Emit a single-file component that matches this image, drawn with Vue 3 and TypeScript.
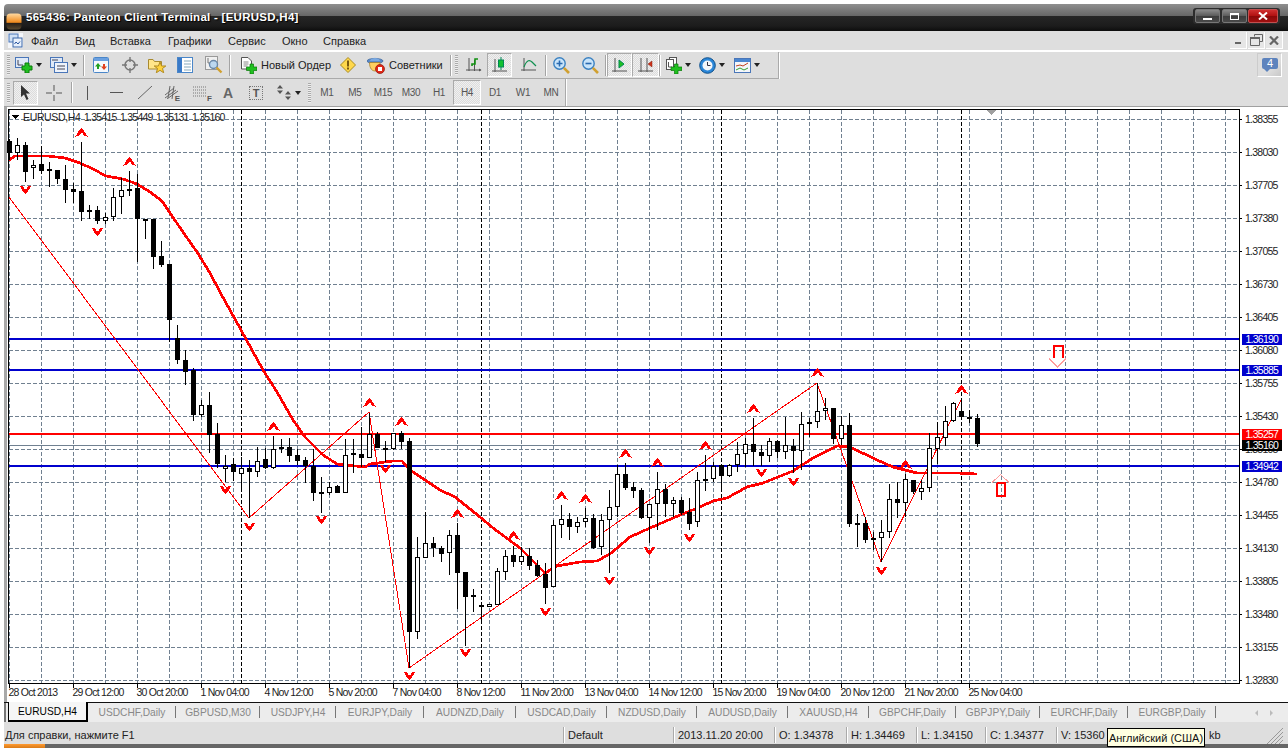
<script setup lang="ts">
type C = [number, number, number, number, number, number]
// k, body top, body bottom, high, low, white(1)/black(0)
const raw: C[] = [
[0,141,153,139,160,0],[1,145,153,138,160,1],[2,145,172,142,182,0],[3,165,168,160,179,1],[4,164,171,146,174,0],[5,169,171,162,187,0],[6,170,179,170,184,0],[7,179,190,165,203,0],[8,189,192,183,203,0],[9,191,212,142,221,0],
[10,210,212,205,219,0],[11,210,221,206,224,0],[12,217,221,213,224,1],[13,197,217,188,221,1],[14,190,197,178,214,1],[15,189,191,171,196,0],[16,188,219,174,262,0],[17,219,221,219,239,0],[18,219,257,219,269,0],[19,256,265,241,267,0],
[20,264,320,264,342,0],[21,338,360,325,364,0],[22,360,372,350,385,0],[23,370,415,368,421,0],[24,405,415,400,417,1],[25,405,435,392,453,0],[26,434,464,423,468,0],[27,466,469,455,482,1],[28,464,472,458,481,0],[29,468,474,457,490,1],
[30,468,472,460,518,0],[31,461,472,447,477,1],[32,459,468,448,469,0],[33,449,468,436,469,1],[34,447,449,439,453,1],[35,447,456,438,462,0],[36,455,461,449,465,0],[37,460,466,457,483,0],[38,466,493,449,501,0],[39,492,494,477,513,0],
[40,487,493,482,495,1],[41,486,493,485,493,0],[42,455,493,439,493,1],[43,453,455,439,473,1],[44,454,458,427,467,0],[45,434,458,413,458,1],[46,434,448,432,448,0],[47,448,449,441,462,0],[48,433,449,433,450,1],[49,433,442,431,449,0],
[50,441,632,438,668,0],[51,557,632,537,639,1],[52,543,558,512,558,1],[53,543,548,537,557,0],[54,548,554,546,562,0],[55,535,553,530,575,1],[56,535,573,523,609,0],[57,572,597,572,646,0],[58,595,597,589,612,0],[59,605,607,605,622,0],
[60,604,607,604,607,1],[61,571,605,568,605,1],[62,556,572,550,580,1],[63,555,562,546,567,0],[64,556,562,547,565,1],[65,556,566,548,570,0],[66,565,576,560,577,0],[67,574,588,563,604,0],[68,525,587,520,587,1],[69,519,525,505,538,1],
[70,519,527,513,540,0],[71,522,527,517,533,1],[72,518,522,508,527,1],[73,518,548,514,549,0],[74,520,547,514,555,1],[75,507,520,490,573,1],[76,474,507,465,517,1],[77,474,488,463,490,0],[78,487,491,482,498,0],[79,490,518,488,519,0],
[80,504,518,504,543,1],[81,489,504,472,530,1],[82,489,504,484,517,0],[83,500,504,497,517,1],[84,500,513,497,515,0],[85,512,524,498,530,0],[86,480,522,472,527,1],[87,479,481,455,491,0],[88,466,479,462,482,1],[89,465,476,464,490,0],
[90,465,476,464,477,1],[91,454,465,442,472,1],[92,444,454,438,467,1],[93,444,452,418,466,0],[94,452,456,445,466,0],[95,441,456,438,462,1],[96,441,452,440,458,0],[97,445,452,417,459,1],[98,446,451,439,473,0],[99,424,451,412,470,1],
[100,422,424,418,437,1],[101,411,422,383,428,1],[102,408,411,398,420,1],[103,408,439,408,444,0],[104,425,439,416,445,1],[105,425,524,413,527,0],[106,523,524,514,547,0],[107,523,540,517,543,0],[108,538,540,532,550,0],[109,532,538,520,562,1],
[110,499,532,484,538,1],[111,499,503,482,518,0],[112,479,503,474,517,1],[113,480,492,480,494,0],[114,488,492,480,500,1],[115,448,488,433,492,1],[116,437,449,422,464,1],[117,421,438,406,446,1],[118,403,421,402,422,1],[119,411,417,400,418,0],
[120,417,419,410,423,0],[121,418,444,414,447,0]]
const candles = raw.map(([k, t, b, h, l, w]) => ({ k, c: 9.5 + 8 * k, t, b, h, l, w: w === 1 }))

const hGrid = Array.from({ length: 18 }, (_, i) => 119 + 33 * i)
const prices = ['1.38355','1.38030','1.37705','1.37380','1.37055','1.36730','1.36405','1.36080','1.35755','1.35430','1.35105','1.34780','1.34455','1.34130','1.33805','1.33480','1.33155','1.32830']
const vGrid = Array.from({ length: 39 }, (_, i) => 9.5 + 32 * i)
const seps = [241.5, 481.5, 721.5, 961.5]
const times = ['28 Oct 2013','29 Oct 12:00','30 Oct 20:00','1 Nov 04:00','4 Nov 12:00','5 Nov 20:00','7 Nov 04:00','8 Nov 12:00','11 Nov 20:00','13 Nov 04:00','14 Nov 12:00','15 Nov 20:00','19 Nov 04:00','20 Nov 12:00','21 Nov 20:00','25 Nov 04:00']

const hLines = [
  { y: 339, c: '#0000cd', p: '1.36190' },
  { y: 370, c: '#0000cd', p: '1.35885' },
  { y: 434, c: '#ff0000', p: '1.35257' },
  { y: 466, c: '#0000cd', p: '1.34942' },
]
const ma = '9,160 15,156 33,156 48,156 65,158 80,163 93,169 106,176 123,179 137,184 150,192 162,201 170,213 183,232 197,252 210,273 220,292 230,310 263,370 277,392 293,420 305,437 323,455 337,464 365,467 370,464 393,461 402,461 410,470 440,490 455,497 480,517 493,528 520,548 545,573 557,566 580,562 597,561 610,554 630,537 650,528 680,515 700,507 713,501 727,498 747,487 763,483 793,471 813,458 837,446 850,447 877,460 893,467 917,473 947,473 957,473 977,474'
const zig = '9,197 249,518 369,412 409,668 817,383 881,562 961,400'
const ups = [[81,128],[129,157],[273,422],[369,398],[401,417],[457,509],[513,531],[561,491],[585,494],[625,449],[657,458],[705,441],[753,404],[817,368],[905,460],[961,385]]
const downs = [[25,194],[97,236],[225,494],[249,531],[321,524],[385,473],[409,680],[465,657],[545,616],[609,585],[649,555],[689,542],[761,477],[793,486],[881,575]]
const upPath = 'M0 0L3 3.500L6 8.500L3 8L1 5L-1 5.500L-3 8L-6 8.500L-3 3.500Z'

const menu = ['Файл', 'Вид', 'Вставка', 'Графики', 'Сервис', 'Окно', 'Справка']
const periods = ['M1', 'M5', 'M15', 'M30', 'H1', 'H4', 'D1', 'W1', 'MN']
const tabs = [
  { n: 'EURUSD,H4', w: 80 }, { n: 'USDCHF,Daily', w: 88 }, { n: 'GBPUSD,M30', w: 84 }, { n: 'USDJPY,H4', w: 76 },
  { n: 'EURJPY,Daily', w: 88 }, { n: 'AUDNZD,Daily', w: 92 }, { n: 'USDCAD,Daily', w: 91 }, { n: 'NZDUSD,Daily', w: 90 },
  { n: 'AUDUSD,Daily', w: 91 }, { n: 'XAUUSD,H4', w: 81 }, { n: 'GBPCHF,Daily', w: 87 }, { n: 'GBPJPY,Daily', w: 84 },
  { n: 'EURCHF,Daily', w: 88 }, { n: 'EURGBP,Daily', w: 88 },
]
</script>

<template>
  <div class="app">
    <header class="title">
      <svg class="logo" width="16" height="17" viewBox="0 0 16 17">
        <defs>
          <linearGradient id="lg" x1="0" y1="0" x2="0" y2="1">
            <stop offset="0" stop-color="#ffd9a0" /><stop offset="0.55" stop-color="#f08a1c" /><stop offset="0.62" stop-color="#2a2118" /><stop offset="1" stop-color="#5a4a30" />
          </linearGradient>
        </defs>
        <rect x="0.5" y="0.5" width="15" height="16" rx="4" fill="url(#lg)" />
      </svg>
      <span class="title-text">565436: Panteon Client Terminal - [EURUSD,H4]</span>
      <div class="winctl">
        <span class="wb"><i class="w-min"></i></span>
        <span class="wb"><i class="w-max"></i></span>
        <span class="wb close">
          <svg width="10" height="8" viewBox="0 0 10 8"><path d="M1 0.5L9 7.5M9 0.5L1 7.5" stroke="#fff" stroke-width="2" fill="none" /></svg>
        </span>
      </div>
    </header>

    <nav class="menu">
      <svg class="doc-ico" width="15" height="15" viewBox="0 0 15 15">
        <rect x="0" y="0" width="15" height="15" fill="#f4f6fa" />
        <rect x="1" y="1" width="9" height="8" fill="#cfe0f5" stroke="#4a76b8" />
        <rect x="5" y="5" width="9" height="9" fill="#e8f0fb" stroke="#3a66a8" />
        <path d="M6.500 11L8 9L10 11L12 8.500" stroke="#2a56a0" fill="none" />
      </svg>
      <div class="menu-items">
        <span v-for="m in menu" :key="m">{{ m }}</span>
      </div>
      <div class="mdi">
        <span class="mb"><i class="m-min"></i></span>
        <span class="mb">
          <svg width="13" height="12" viewBox="0 0 13 12"><path d="M4.500 2.500V0.500H12.500V7.500H10M0.500 3.500H9.500V11.500H0.500Z" stroke="#666" fill="none" /><path d="M0 4H10" stroke="#666" stroke-width="2" /></svg>
        </span>
        <span class="mb">
          <svg width="10" height="9" viewBox="0 0 10 9"><path d="M1 0.500L9 8.500M9 0.500L1 8.500" stroke="#666" stroke-width="2.200" /></svg>
        </span>
      </div>
    </nav>

    <div class="tb-row">
      <div class="tb tb1">
        <span class="grip"></span>
        <span class="cell">
          <svg width="18" height="16" viewBox="0 0 18 16"><rect x="0.500" y="0.500" width="13" height="10" fill="#dfe9f7" stroke="#4a76b8" /><path d="M3 3V8H8" stroke="#445" fill="none" /><path d="M10 6h4v3h3v4h-3v3h-4v-3H7V9h3z" fill="#20c020" stroke="#0a7a0a" /></svg>
          <i class="drop"></i>
        </span>
        <span class="cell">
          <svg width="18" height="16" viewBox="0 0 18 16"><rect x="0.500" y="0.500" width="12" height="10" fill="#dfe9f7" stroke="#4a76b8" /><rect x="4.500" y="5.500" width="13" height="10" fill="#eef3fb" stroke="#4a76b8" /><path d="M2 3h6M7 9h8M7 12h8" stroke="#445" /></svg>
          <i class="drop"></i>
        </span>
        <span class="sep"></span>
        <span class="cell">
          <svg width="16" height="16" viewBox="0 0 16 16"><rect x="0.500" y="0.500" width="15" height="15" rx="1" fill="#f4f8fd" stroke="#4a86c8" /><rect x="1" y="1" width="14" height="3" fill="#6aa0e0" /><path d="M5 6L8 9.500H6V12H4V9.500H2Z" fill="#20a020" /><path d="M11 13L8 9.500H10V7H12V9.500H14Z" fill="#e04020" /></svg>
        </span>
        <span class="cell">
          <svg width="16" height="16" viewBox="0 0 16 16" fill="none" stroke="#777"><circle cx="8" cy="8" r="5" stroke-width="1.500" /><path d="M8 0V5M8 11V16M0 8H5M11 8H16" stroke-width="1.400" /></svg>
        </span>
        <span class="cell">
          <svg width="18" height="16" viewBox="0 0 18 16"><path d="M0.500 2.500H5L6.500 4.500H13.500V12H0.500Z" fill="#ffe58a" stroke="#a88a30" /><path d="M12 5L13.600 9H17.800L14.500 11.500L15.700 15.800L12 13.300L8.300 15.800L9.500 11.500L6.200 9H10.400Z" fill="#ffd23c" stroke="#b08a20" /></svg>
        </span>
        <span class="cell">
          <svg width="16" height="16" viewBox="0 0 16 16"><rect x="0.500" y="0.500" width="15" height="15" fill="#fff" stroke="#4a86c8" /><rect x="1" y="1" width="4" height="14" fill="#3a7ac8" /><path d="M7 4h7M7 7h7M7 10h7M7 13h7" stroke="#8ab" /></svg>
        </span>
        <span class="cell">
          <svg width="18" height="18" viewBox="0 0 18 18"><rect x="0.500" y="0.500" width="12" height="13" fill="#f0f0f0" stroke="#999" /><path d="M3 2V7H8" stroke="#777" fill="none" /><circle cx="8.500" cy="8.500" r="4" fill="#bcd8f0" stroke="#6a88a8" stroke-width="1.400" /><path d="M11.500 11.500L16.500 16.500" stroke="#d0a030" stroke-width="2.400" /></svg>
        </span>
        <span class="sep"></span>
        <span class="cell lbl first">
          <svg width="17" height="17" viewBox="0 0 17 17"><path d="M1.500 0.500H8L11.500 4V12H1.500Z" fill="#fff" stroke="#555" /><path d="M3.500 5h5M3.500 7h5M3.500 9h4" stroke="#888" /><path d="M10 7h3.500v3H17v3.500h-3.500V17H10v-3.500H6.500V10H10z" fill="#20c020" stroke="#0a7a0a" stroke-width=".7" /></svg>
          <span>Новый Ордер</span>
        </span>
        <span class="cell">
          <svg width="16" height="16" viewBox="0 0 16 16"><path d="M8 0.500L15.500 8L8 15.500L0.500 8Z" fill="#ffd84c" stroke="#a88a20" stroke-linejoin="round" /><rect x="7" y="3.500" width="2" height="6" fill="#7a5a10" /><rect x="7" y="10.500" width="2" height="2" fill="#7a5a10" /></svg>
        </span>
        <span class="cell lbl second">
          <svg width="18" height="18" viewBox="0 0 18 18"><ellipse cx="8" cy="5" rx="8" ry="2.600" fill="#5a8ac8" stroke="#36609a" stroke-width=".7" /><path d="M3 5C3 1 13 1 13 5Z" fill="#7aa8e0" /><path d="M2.500 6.500C2.500 13 5.500 15 8 15C10 15 13 13 13 6.500Z" fill="#ffd060" stroke="#a07820" stroke-width=".7" /><circle cx="13" cy="13" r="4.500" fill="#e02818" stroke="#901408" stroke-width=".7" /><rect x="11" y="11" width="4" height="4" fill="#fff" /></svg>
          <span>Советники</span>
        </span>
        <span class="sep"></span>
        <span class="grip"></span>
        <span class="cell">
          <svg width="16" height="16" viewBox="0 0 16 16" fill="none"><path d="M3 1V14M8.500 3V14M0 13H15" stroke="#555" /><path d="M13 14.500L15.500 13L13 11.500" fill="#555" /><path d="M6 9V7H9V2H12" stroke="#109010" stroke-width="1.600" /></svg>
        </span>
        <span class="cell on">
          <svg width="16" height="17" viewBox="0 0 16 17" fill="none"><path d="M3 2V15M0 14H15" stroke="#555" /><path d="M9 0V13" stroke="#085" /><rect x="6.500" y="3" width="5" height="7" fill="#10c030" stroke="#085" /></svg>
        </span>
        <span class="cell">
          <svg width="16" height="16" viewBox="0 0 16 16" fill="none"><path d="M3 1V14M0 13H15" stroke="#555" /><path d="M3 10C6 2 9 3 11 5L15 9" stroke="#109050" stroke-width="1.200" /></svg>
        </span>
        <span class="sep"></span>
        <span class="cell">
          <svg width="17" height="17" viewBox="0 0 17 17"><circle cx="6.500" cy="6.500" r="5.700" fill="#c8e4fa" stroke="#3a80c0" stroke-width="1.400" /><path d="M3.500 6.500H9.500M6.500 3.500V9.500" stroke="#2a6ab0" stroke-width="1.600" /><path d="M10.800 10.800L16 16" stroke="#d0a030" stroke-width="2.600" /></svg>
        </span>
        <span class="cell">
          <svg width="17" height="17" viewBox="0 0 17 17"><circle cx="6.500" cy="6.500" r="5.700" fill="#c8e4fa" stroke="#3a80c0" stroke-width="1.400" /><path d="M3.500 6.500H9.500" stroke="#2a6ab0" stroke-width="1.600" /><path d="M10.800 10.800L16 16" stroke="#d0a030" stroke-width="2.600" /></svg>
        </span>
        <span class="sep"></span>
        <span class="cell on">
          <svg width="16" height="16" viewBox="0 0 16 16" fill="none"><path d="M3 1V15M0 14H15" stroke="#555" /><path d="M7 3L12 7L7 11Z" fill="#20c020" stroke="#085" /></svg>
        </span>
        <span class="cell on">
          <svg width="16" height="16" viewBox="0 0 16 16" fill="none"><path d="M3 1V15M9 1V15M0 14H15" stroke="#555" /><path d="M10 7L14 4V10Z" fill="#d03018" stroke="#802010" stroke-width=".5" /></svg>
        </span>
        <span class="sep"></span>
        <span class="cell">
          <svg width="17" height="17" viewBox="0 0 17 17"><rect x="4.500" y="0.500" width="7" height="9" fill="#fff" stroke="#555" /><rect x="1.500" y="2.500" width="7" height="10" fill="#fff" stroke="#555" /><path d="M3.500 5V10H7" stroke="#555" fill="none" /><path d="M9.500 7h3.500v3H17v3.500h-4V17H9.500v-3.500H6V10h3.500z" fill="#20c020" stroke="#0a7a0a" stroke-width=".7" /></svg>
          <i class="drop"></i>
        </span>
        <span class="cell">
          <svg width="17" height="17" viewBox="0 0 17 17"><circle cx="8.500" cy="8.500" r="7.800" fill="#2a86d8" stroke="#10508a" /><circle cx="8.500" cy="8.500" r="5" fill="#f2f6fa" /><path d="M8.500 5V8.500H11.500" stroke="#334" fill="none" /></svg>
          <i class="drop"></i>
        </span>
        <span class="cell">
          <svg width="17" height="15" viewBox="0 0 17 15"><rect x="0.500" y="0.500" width="16" height="14" fill="#f4f6fa" stroke="#4a76b8" /><rect x="1" y="1" width="15" height="3" fill="#4a86d0" /><path d="M2 8L6 7L9 8L14 5" stroke="#c04020" fill="none" /><path d="M2 12L6 10L10 12L14 10" stroke="#30a030" fill="none" /></svg>
          <i class="drop"></i>
        </span>
      </div>
      <div class="notify">
        <span class="bubble">4</span>
        <i class="bubble-tail"></i>
      </div>
    </div>

    <div class="tb2-row">
      <div class="tb tb2">
        <span class="grip"></span>
        <span class="cell on">
          <svg width="12" height="15" viewBox="0 0 12 15"><path d="M1 0V12L4 9.500L6.500 15L8.500 14L6 8.500H10Z" fill="#333" /></svg>
        </span>
        <span class="cell">
          <svg width="16" height="16" viewBox="0 0 16 16" fill="none" stroke="#555"><path d="M8 0V6M8 10V16M0 8H6M10 8H16" /></svg>
        </span>
        <span class="sep"></span>
        <span class="cell"><svg width="3" height="14" viewBox="0 0 3 14"><path d="M1.500 0V14" stroke="#555" /></svg></span>
        <span class="cell"><svg width="13" height="3" viewBox="0 0 13 3"><path d="M0 1.500H13" stroke="#555" /></svg></span>
        <span class="cell"><svg width="14" height="13" viewBox="0 0 14 13"><path d="M0 13L14 0" stroke="#666" fill="none" /></svg></span>
        <span class="cell tool-t">
          <svg width="13" height="13" viewBox="0 0 13 13" fill="none" stroke="#666"><path d="M0 9L9 2M0 12L11 4M2 13L13 5M5 0L3 12M9 0L7 13" /></svg>
          <b class="tiny">E</b>
        </span>
        <span class="cell tool-t">
          <svg width="14" height="13" viewBox="0 0 14 13" fill="none" stroke="#777" stroke-dasharray="1 1"><path d="M0 1H14M0 4H14M0 7H14M0 10H14" /></svg>
          <b class="tiny">F</b>
        </span>
        <span class="cell big-a">A</span>
        <span class="cell big-t"><span>T</span></span>
        <span class="cell">
          <svg width="15" height="15" viewBox="0 0 15 15"><path d="M3 0L6 3.500H0ZM3 9L0 5.500H6ZM11 6L14 9.500H8ZM11 15L8 11.500H14Z" fill="#555" /></svg>
          <i class="drop"></i>
        </span>
        <span class="grip"></span>
        <span class="periods">
          <span v-for="p in periods" :key="p" class="per" :class="{ on: p === 'H4' }">{{ p }}</span>
        </span>
      </div>
    </div>

    <main class="chart">
      <svg class="plot" width="1288" height="595" viewBox="0 107 1288 595">
        <g shape-rendering="crispEdges">
          <rect x="4" y="107" width="3" height="595" fill="#a8a8a8" />
          <rect x="8.500" y="109.500" width="1231" height="574" fill="#fff" stroke="#000" />
          <g stroke="#708090" stroke-dasharray="4 2" fill="none">
            <line v-for="y in hGrid" :key="'h' + y" x1="9" :y1="y + 0.5" x2="1239" :y2="y + 0.5" />
            <line v-for="x in vGrid" :key="'v' + x" :x1="x" y1="110" :x2="x" y2="683" />
          </g>
          <g stroke="#000" stroke-dasharray="4 2" fill="none">
            <line v-for="x in seps" :key="'s' + x" :x1="x" y1="110" :x2="x" y2="683" />
          </g>
          <line x1="9" y1="445" x2="1239" y2="445" stroke="#708090" />
          <g>
            <rect v-for="l in hLines" :key="l.p" x="9" :y="l.y - 1" width="1230" height="2" :fill="l.c" />
          </g>
          <polyline :points="zig" fill="none" stroke="#ff0000" />
          <polyline :points="ma" fill="none" stroke="#ff0000" stroke-width="2.700" />
          <g v-for="c in candles" :key="c.k">
            <line :x1="c.c" :y1="c.h" :x2="c.c" :y2="c.l" stroke="#000" />
            <rect v-if="c.w" :x="c.c - 2" :y="c.t + 0.5" width="4" :height="Math.max(c.b - c.t - 1, 1)" fill="#fff" stroke="#000" />
            <rect v-else :x="c.c - 2.5" :y="c.t" width="5" :height="Math.max(c.b - c.t, 2)" fill="#000" />
          </g>
          <path v-for="u in ups" :key="'u' + u[0]" :d="upPath" :transform="`translate(${u[0] + 0.5} ${u[1]})`" fill="#ff0000" />
          <path v-for="d in downs" :key="'d' + d[0]" :d="upPath" :transform="`translate(${d[0] + 0.5} ${d[1]}) scale(1 -1)`" fill="#ff0000" />
          <path d="M1054 358V346H1062.500V358" fill="none" stroke="#ff0000" stroke-width="2" />
          <path d="M1049 358.500L1057.500 367L1066 358.500" fill="none" stroke="#ff9c9c" />
          <path d="M996.500 483V496H1005V483H996.500" fill="none" stroke="#ff0000" stroke-width="2" />
          <path d="M992 482.500L1000.500 474.500L1009 482.500" fill="none" stroke="#ff9c9c" />
          <path d="M986 110H997L991.500 115Z" fill="#a0a0a0" />
          <path d="M12 115H19L15.500 119Z" fill="#000" />
          <line v-for="y in hGrid" :key="'t' + y" x1="1239" :y1="y + 0.5" x2="1242" :y2="y + 0.5" stroke="#000" />
          <line v-for="(t, i) in times" :key="'tk' + t" :x1="9.5 + 64 * i" y1="683" :x2="9.5 + 64 * i" y2="688" stroke="#000" />
        </g>
        <text class="lab" x="23" y="121">EURUSD,H4</text>
        <text class="num" x="84" y="121">1.35415</text>
        <text class="num" x="120" y="121">1.35449</text>
        <text class="num" x="156" y="121">1.35131</text>
        <text class="num" x="192" y="121">1.35160</text>
        <text v-for="(p, i) in prices" :key="p" class="num" x="1245" :y="hGrid[i] + 4">{{ p }}</text>
        <text v-for="(t, i) in times" :key="t" class="num" :x="8.5 + 64 * i" y="696">{{ t }}</text>
        <g shape-rendering="crispEdges">
          <rect v-for="l in hLines" :key="'b' + l.p" x="1242" :y="l.y - 5.5" width="39.500" height="11" :fill="l.c" />
          <rect x="1242" y="439.500" width="39.500" height="11" fill="#000" />
        </g>
        <text v-for="l in hLines" :key="'bt' + l.p" class="num wh" x="1245.500" :y="l.y + 4">{{ l.p }}</text>
        <text class="num wh" x="1245.500" y="449">1.35160</text>
      </svg>
    </main>

    <div class="tabs">
      <span class="tabs-pad"></span>
      <span v-for="(t, i) in tabs" :key="t.n" class="tab" :class="{ active: i === 0 }" :style="{ width: t.w + 'px' }">{{ t.n }}</span>
      <span class="tab-nav"><i class="nl"></i><i class="nr"></i></span>
    </div>

    <footer class="status">
      <span class="st s0">Для справки, нажмите F1</span>
      <span class="st s1">Default</span>
      <span class="st s2">2013.11.20 20:00</span>
      <span class="st s3">O: 1.34378</span>
      <span class="st s4">H: 1.34469</span>
      <span class="st s5">L: 1.34150</span>
      <span class="st s6">C: 1.34377</span>
      <span class="st s7">V: 15360</span>
      <span class="st s8">kb</span>
      <svg class="resize" width="16" height="16" viewBox="0 0 16 16" fill="none" stroke="#999"><path d="M0 16L16 0M4 16L16 4M8 16L16 8M12 16L16 12" /></svg>
    </footer>
    <div class="taskbar"><i></i></div>
    <div class="tip">Английский (США)</div>
  </div>
</template>

<style scoped>
.app {
  position: relative;
  width: 1288px;
  height: 748px;
  overflow: hidden;
  background: #fff;
  display: flex;
  flex-direction: column;
  font: 11px "Liberation Sans", Arial, sans-serif;
  color: #222;
  padding-top: 4px;
  box-sizing: border-box;
}
.title {
  margin-left: 4px;
  height: 27px;
  flex: none;
  display: flex;
  align-items: center;
  padding-left: 2px;
  border-radius: 4px 0 0 0;
  background: linear-gradient(#8f8f8f 0, #666 12px, #262626 12px, #1c1c1c 22px, #0d0d0d 27px);
}
.logo { margin-top: 8px; flex: none; }
.title-text {
  margin-left: 4px;
  margin-top: -2px;
  color: #fff;
  font: bold 11.5px "Liberation Sans", Arial, sans-serif;
  letter-spacing: 0.27px;
  text-shadow: 1px 1px 1px #000;
  white-space: nowrap;
}
.winctl {
  margin-left: auto;
  margin-right: 8px;
  margin-top: -3px;
  height: 16px;
  padding: 1px 2px;
  box-sizing: border-box;
  display: flex;
  gap: 1.5px;
  background: #2c2c2c;
  border-radius: 3px;
}
.wb {
  width: 25px;
  height: 14px;
  box-sizing: border-box;
  background: linear-gradient(#8a8a8a, #5a5a5a 50%, #3c3c3c 50%, #4a4a4a);
  border: 1px solid #777;
  border-radius: 2px;
  display: flex;
  align-items: center;
  justify-content: center;
}
.wb.close {
  width: 30px;
  background: linear-gradient(#d03030, #b01010 50%, #8a0808 50%, #a01010);
  border-color: #c05050;
}
.w-min { width: 9px; height: 2px; background: #fff; margin-top: 5px; }
.w-max { width: 9px; height: 7px; border: 1px solid #fff; border-top-width: 2px; box-sizing: border-box; }
.menu {
  margin-left: 4px;
  height: 19px;
  flex: none;
  display: flex;
  align-items: center;
  background: #dedede;
  border-bottom: 2px solid #fff;
}
.doc-ico { margin-left: 4px; flex: none; }
.menu-items {
  display: grid;
  grid-template-columns: 44px 35px 58px 60px 54px 41px auto;
  margin-left: 8px;
  font-size: 11px;
  color: #222;
}
.mdi { margin-left: auto; display: flex; gap: 1px; margin-right: 5px; }
.mb {
  width: 17px;
  height: 17px;
  display: flex;
  align-items: center;
  justify-content: center;
  background: #e6e6e6;
  border-right: 1px solid #fff;
  border-bottom: 1px solid #fff;
  box-sizing: border-box;
}
.m-min { width: 6px; height: 2px; background: #666; margin-top: 5px; }
.tb-row { margin-left: 4px; height: 27px; flex: none; display: flex; background: #dedede; }
.tb2-row { margin-left: 4px; height: 28px; flex: none; background: #dedede; border-bottom: 1px solid #a0a0a0; box-sizing: border-box; }
.tb {
  display: grid;
  align-items: center;
  justify-items: center;
  background: #dedede;
  box-sizing: border-box;
}
.tb1 {
  height: 27px;
  grid-template-columns: 9px 31px 39px 2px 31px 27px 28px 28px 30px 2px 104px 25px 90px 2px 8px 27px 25px 33px 2px 29px 29px 2px 25px 27px 2px 33px 35px 35px;
  width: 775px;
  border-right: 1px solid #aaa;
  border-bottom: 1px solid #aaa;
  box-shadow: 1px 1px 0 #fff;
}
.tb2 {
  height: 27px;
  width: 562px;
  grid-template-columns: 9px 25px 32px 3px 28px 30px 27px 26px 32px 24px 32px 33px 8px 252px;
  border-right: 1px solid #aaa;
  box-shadow: 1px 0 0 #fff;
}
.cell {
  display: flex;
  align-items: center;
  justify-content: center;
  gap: 3px;
  height: 100%;
  width: 100%;
  box-sizing: border-box;
}
.cell.on {
  height: 24px;
  background: repeating-conic-gradient(#f0f0f0 0 25%, #dcdcdc 0 50%) 0 0 / 2px 2px;
  border: 1px solid;
  border-color: #aaa #fff #fff #aaa;
}
.cell.lbl { justify-content: flex-start; gap: 4px; white-space: nowrap; color: #222; }
.cell.first { padding-left: 9px; }
.cell.second { padding-left: 7px; }
.grip {
  width: 3px;
  height: 20px;
  background: repeating-linear-gradient(#aaa 0 1px, #eee 1px 2px);
}
.sep {
  width: 2px;
  height: 21px;
  background: linear-gradient(90deg, #a4a4a4 1px, #fff 1px);
}
.drop {
  width: 0;
  height: 0;
  border-style: solid;
  border-color: #222 transparent transparent;
  border-width: 4px 3.5px 0;
}
.tool-t { position: relative; }
.tiny {
  position: absolute;
  font: bold 8px "Liberation Sans", sans-serif;
  color: #555;
  right: 4px;
  bottom: 3px;
}
.big-a { font: bold 14px "Liberation Sans", sans-serif; color: #666; }
.big-t span {
  width: 12px;
  height: 12px;
  border: 1px dotted #777;
  display: flex;
  align-items: center;
  justify-content: center;
  font: bold 11px "Liberation Sans", sans-serif;
  color: #555;
}
.periods { display: flex; width: 252px; height: 100%; }
.per {
  width: 28px;
  display: flex;
  align-items: center;
  justify-content: center;
  font-size: 10px;
  letter-spacing: -0.3px;
  color: #555;
  box-sizing: border-box;
}
.per.on {
  margin: 1px 0;
  background: repeating-conic-gradient(#f0f0f0 0 25%, #dcdcdc 0 50%) 0 0 / 2px 2px;
  border: 1px solid;
  border-color: #aaa #fff #fff #aaa;
}
.notify {
  margin-left: auto;
  margin-right: 6px;
  margin-top: 1px;
  width: 25px;
  height: 24px;
  position: relative;
  background: linear-gradient(135deg, #dedede 60%, #c8c8c8);
  border: 1px solid;
  border-color: #ccc #fff #fff #ccc;
  box-sizing: border-box;
}
.bubble {
  position: absolute;
  left: 4px;
  top: 4px;
  width: 16px;
  height: 11px;
  background: #5d83bd;
  border-radius: 2px;
  color: #fff;
  font: 11px/11px "Liberation Sans", sans-serif;
  text-align: center;
}
.bubble-tail {
  position: absolute;
  left: 6px;
  top: 15px;
  border-style: solid;
  border-color: #5d83bd transparent transparent;
  border-width: 3px 3px 0;
}
.chart { height: 595px; flex: none; }
.plot { display: block; }
.plot text { fill: #222; font-family: "Liberation Sans", Arial, sans-serif; font-size: 10.5px; }
.plot .lab { letter-spacing: -0.35px; }
.plot .num { letter-spacing: -0.75px; white-space: pre; }
.plot .wh { fill: #fff; }
.tabs {
  height: 20px;
  flex: none;
  display: flex;
  margin-left: 4px;
  background: #ececec;
  border-top: 1px solid #111;
  box-sizing: border-box;
}
.tabs-pad { width: 4px; box-sizing: border-box; border-left: 2px solid #777; }
.tab {
  position: relative;
  display: flex;
  align-items: center;
  justify-content: center;
  font-size: 10.2px;
  color: #888;
  box-sizing: border-box;
  flex: none;
}
.tab:not(.active)::after {
  content: "";
  position: absolute;
  right: 0;
  top: 3px;
  height: 12px;
  width: 1px;
  background: #777;
}
.tab.active {
  color: #000;
  background: #f6f6f6;
  border-style: solid;
  border-color: #000;
  border-width: 0 2px 2px 1px;
  margin-top: -1px;
  height: 20px;
}
.tab-nav { margin-left: 39px; display: flex; gap: 12px; align-items: center; }
.nl, .nr { width: 0; height: 0; border-style: solid; border-color: transparent #bbb; }
.nl { border-width: 3.5px 3.5px 3.5px 0; }
.nr { border-width: 3.5px 0 3.5px 3.5px; }
.status {
  height: 22px;
  flex: none;
  margin-left: 4px;
  padding-top: 4px;
  box-sizing: border-box;
  display: grid;
  grid-template-columns: 559px 110px 101px 72px 70px 69px 71px 151px 60px 21px;
  align-items: center;
  background: #dedede;
  font-size: 11px;
  color: #222;
  white-space: nowrap;
}
.st { padding-left: 4px; height: 16px; line-height: 16px; box-sizing: border-box; border-left: 1px solid #aaa; box-shadow: inset 1px 0 0 #fff; }
.s0 { border-left: 0; box-shadow: none; padding-left: 1px; }
.s8 { border: 0; box-shadow: none; padding-left: 2px; }
.resize { align-self: end; }
.taskbar { height: 4px; flex: none; margin-left: 4px; background: #666; }
.taskbar i { display: block; width: 41px; height: 100%; background: linear-gradient(#ff9a30, #d87a18); }
.tip {
  position: absolute;
  left: 1107px;
  top: 728px;
  width: 98px;
  height: 19px;
  box-sizing: border-box;
  background: #ffffe1;
  border: 1px solid #000;
  font-size: 11px;
  line-height: 18px;
  color: #111;
  text-align: center;
  white-space: nowrap;
}
</style>
